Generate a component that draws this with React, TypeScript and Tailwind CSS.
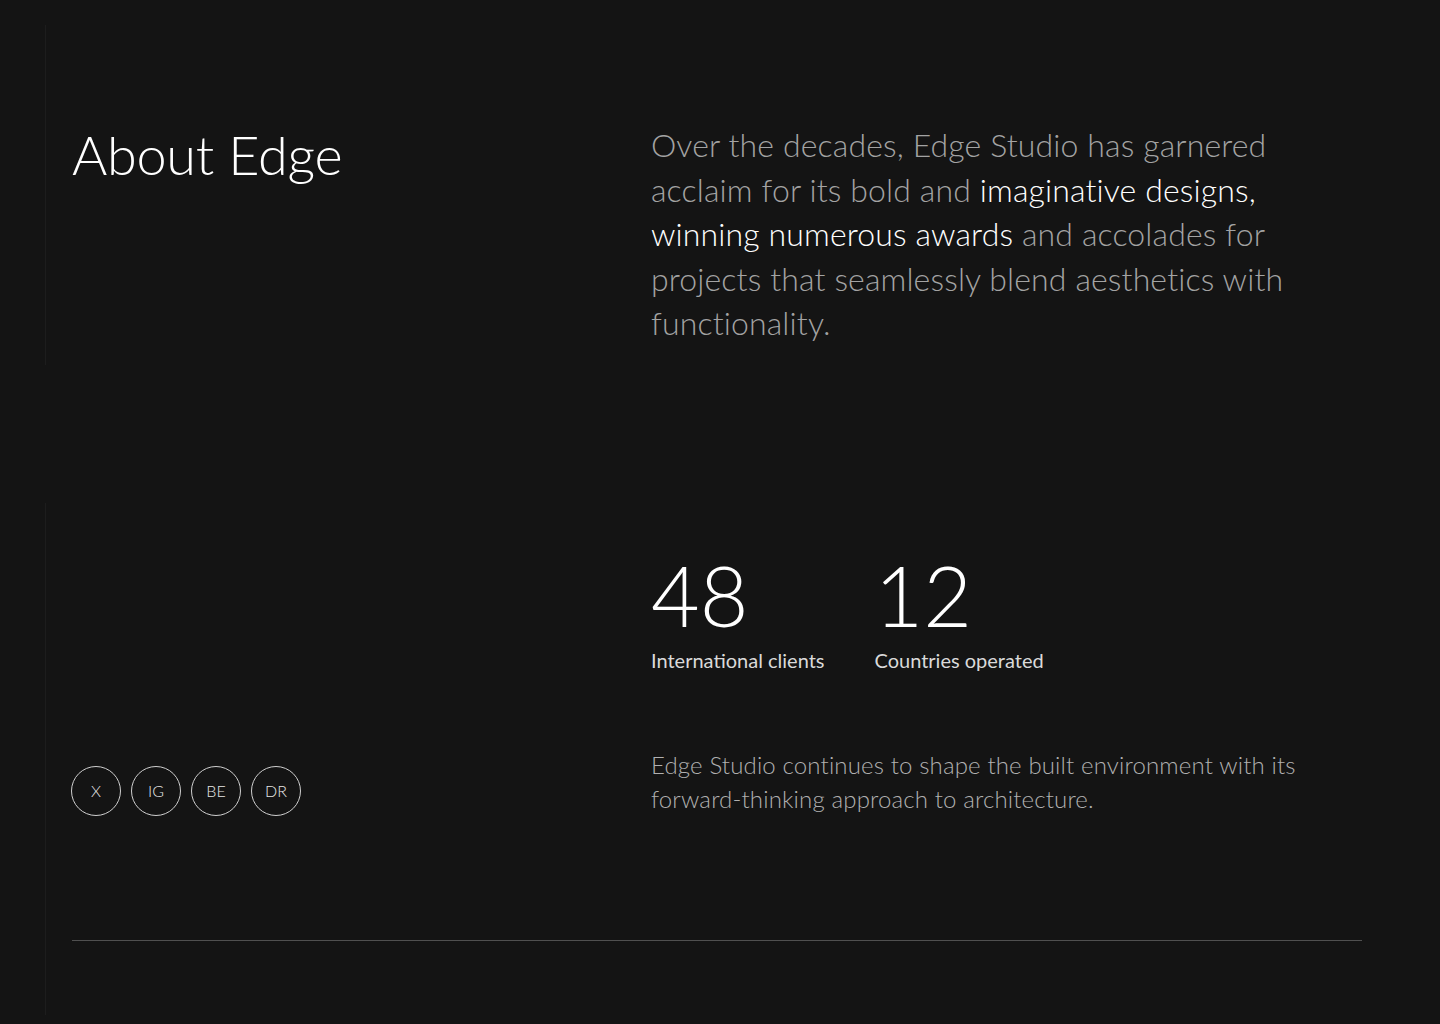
const font = "font-['Lato','Open_Sans',sans-serif]";

function Social({ label }: { label: string }) {
  return (
    <a
      href="#"
      className="flex h-[50px] w-[50px] items-center justify-center rounded-full border-[1.5px] border-[#cfcfcf] text-[16px] font-light text-[#e6e6e6]"
    >
      {label}
    </a>
  );
}

export default function App() {
  return (
    <div className={`min-h-screen w-full bg-[#141414] ${font}`}>
      <div className="pl-[45px] pt-[25px]">
        {/* intro */}
        <section className="grid h-[340px] grid-cols-[605px_1fr] border-l border-[#1d1d1d]">
          <div className="pl-[26px] pt-[103px]">
            <h2 className="text-[54px] font-light leading-none tracking-[-0.005em] text-white">About Edge</h2>
          </div>
          <p className="w-[680px] pt-[98px] text-[32px] font-light leading-[44.6px] tracking-[0.004em] text-[#a3a3a3]">
            Over the decades, Edge Studio has garnered acclaim for its bold and{" "}
            <span className="text-white">imaginative designs,</span>{" "}
            <span className="text-white">winning numerous awards</span> and accolades for projects that seamlessly
            blend aesthetics with functionality.
          </p>
        </section>

        {/* stats + socials */}
        <section className="mt-[138px] h-[512px] border-l border-[#1d1d1d] pr-[78px]">
          <div className="grid grid-cols-[605px_1fr]">
            <div className="flex items-start pl-[25px] pt-[263px]">
              <div className="flex gap-[10px]">
                <Social label="X" />
                <Social label="IG" />
                <Social label="BE" />
                <Social label="DR" />
              </div>
            </div>
            <div className="pt-[50px]">
              <div className="flex gap-[50px]">
                <div>
                  <div className="text-[84px] font-light leading-none text-white">48</div>
                  <div className="mt-[8px] text-[20px] text-[#dadada]">International clients</div>
                </div>
                <div>
                  <div className="text-[84px] font-light leading-none text-white">12</div>
                  <div className="mt-[8px] text-[20px] text-[#dadada]">Countries operated</div>
                </div>
              </div>
              <p className="mt-[73px] w-[700px] text-[24px] font-light leading-[34px] tracking-[0.006em] text-[#b0b0b0]">
                Edge Studio continues to shape the built environment with its forward-thinking approach to
                architecture.
              </p>
            </div>
          </div>
          <div className="ml-[26px] mt-[124px] h-px bg-[#505050]" />
        </section>
      </div>
    </div>
  );
}
